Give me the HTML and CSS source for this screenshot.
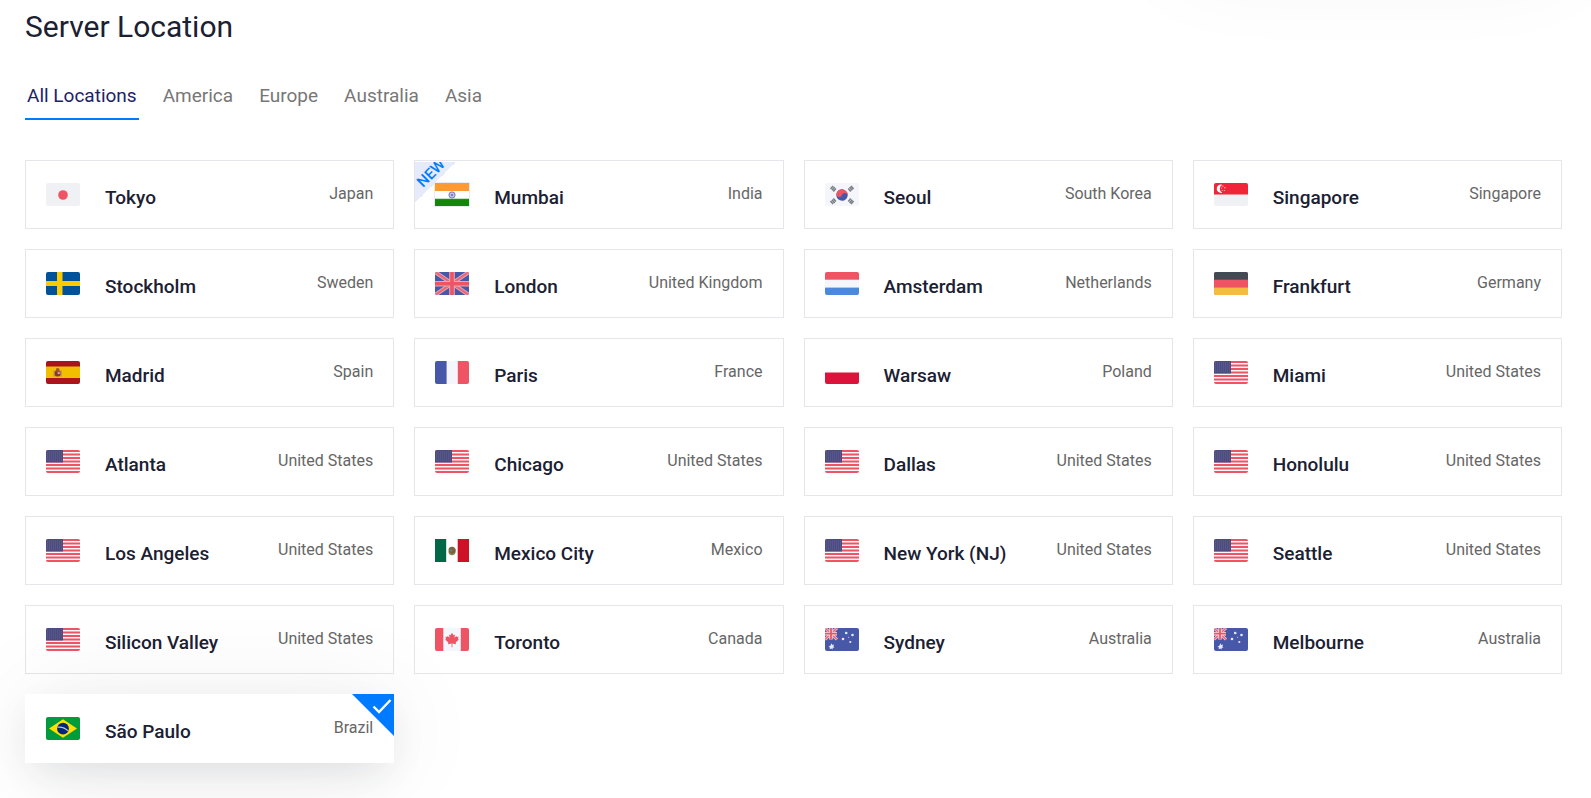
FILE: index.html
```html
<!DOCTYPE html>
<html lang="en">
<head>
<meta charset="utf-8">
<meta name="viewport" content="width=device-width, initial-scale=1">
<title>Server Location</title>
<link rel="stylesheet" href="styles.css">
</head>
<body>
<svg class="sprite" aria-hidden="true">
  <symbol id="jp" viewBox="0 0 34 23"><rect width="34" height="23" fill="#f0f1f5"/><circle cx="17" cy="12" r="4.8" fill="#ee5464"/></symbol>
  <symbol id="in" viewBox="0 0 34 23"><rect width="34" height="23" fill="#fff"/><rect width="34" height="8" fill="#ff9933"/><rect y="16" width="34" height="7" fill="#138808"/><rect y="15.5" width="34" height=".6" fill="#8cc487"/><circle cx="17" cy="12" r="3.1" fill="#c3c3e3" stroke="#7878b8" stroke-width="1"/><circle cx="17" cy="12" r="1.1" fill="#6c6cb0"/></symbol>
  <symbol id="kr" viewBox="0 0 34 23"><rect width="34" height="23" fill="#f5f6fb"/><g transform="rotate(20 17 12)"><circle cx="17" cy="12" r="5.7" fill="#4758a9"/><path d="M11.3 12a5.7 5.7 0 0 1 11.4 0a2.85 2.85 0 0 0-5.7 0a2.85 2.85 0 0 1-5.7 0z" fill="#ee5464"/></g><g stroke="#7b7f87" stroke-width="1.6"><path d="M5.5 5.4l2.6-3M7 6.8l2.7-3.2M8.3 8l2.6-3.1M23.3 4.9l2.5 3.1M24.6 3.6l2.7 3.2M26 2.4l2.6 3M5.5 17.6l2.6 3M7 16.2l2.7 3.2M8.3 15l2.6 3.1M23.3 18.1l2.5-3.1M24.6 19.4l2.7-3.2M26 20.6l2.6-3" transform="translate(0 .5)"/></g></symbol>
  <symbol id="sg" viewBox="0 0 34 23"><rect width="34" height="23" fill="#f0f1f5"/><rect width="34" height="11.5" fill="#f02538"/><path d="M8.2 1.7a4.2 4.2 0 1 0 0 8a4.5 4.5 0 0 1 0-8z" fill="#fff"/><g fill="#ffc5cb"><circle cx="8.9" cy="3.1" r=".7"/><circle cx="7.6" cy="5" r=".6"/><circle cx="10.9" cy="4.7" r=".7"/><circle cx="8.3" cy="7.5" r=".6"/><circle cx="10.4" cy="7.5" r=".6"/></g></symbol>
  <symbol id="se" viewBox="0 0 34 23"><rect width="34" height="23" fill="#00529b"/><path d="M11 0h5.5v23H11zM0 9h34v5H0z" fill="#fecb00"/></symbol>
  <symbol id="gb" viewBox="0 0 34 23"><rect width="34" height="23" fill="#4758a9"/><path d="M0 0l34 23M34 0L0 23" stroke="#dfa8be" stroke-width="4"/><path d="M0 0l34 23M34 0L0 23" stroke="#ee6674" stroke-width="2.2"/><path d="M17 0v23M0 11.8h34" stroke="#f4a5b1" stroke-width="5.6"/><path d="M17 0v23M0 11.8h34" stroke="#ee5464" stroke-width="3.6"/></symbol>
  <symbol id="nl" viewBox="0 0 34 23"><rect width="34" height="23" fill="#f4f6fb"/><rect width="34" height="7.7" fill="#ee5464"/><rect y="15.6" width="34" height="7.4" fill="#4a89dc"/></symbol>
  <symbol id="de" viewBox="0 0 34 23"><rect width="34" height="23" fill="#ee5464"/><rect width="34" height="7.7" fill="#434a54"/><rect y="15.6" width="34" height="7.4" fill="#f6bb42"/></symbol>
  <symbol id="es" viewBox="0 0 34 23"><rect width="34" height="23" fill="#aa151b"/><rect y="5.5" width="34" height="11.5" fill="#f1bf00"/><path d="M7.5 9.5h2v6h-2zM13.8 9.5h2v6h-2z" fill="#c98b4b"/><rect x="8.800" y="9.600" width="5.600" height="6" rx="2" fill="#853a2c"/><circle cx="11.7" cy="8.9" r="1.9" fill="#a9512a"/><circle cx="12.8" cy="12" r="1.3" fill="#c9a0a0"/></symbol>
  <symbol id="fr" viewBox="0 0 34 23"><rect width="34" height="23" fill="#f5f6fb"/><rect width="11.6" height="23" fill="#4758a9"/><rect x="22.8" width="11.2" height="23" fill="#ee5464"/></symbol>
  <symbol id="pl" viewBox="0 0 34 23"><rect width="34" height="23" fill="#fff"/><rect y="11.5" width="34" height="11.5" fill="#dc143c"/></symbol>
  <symbol id="us" viewBox="0 0 34 23"><rect width="34" height="23" fill="#f7f6fa"/><path d="M0 .9h34M0 4.4h34M0 8h34M0 11.5h34M0 15h34M0 18.6h34M0 22.1h34" stroke="#ee5464" stroke-width="2"/><rect width="17" height="12.5" fill="#4d4c80"/><path d="M1 2h15M1 4h15M1 6h15M1 8h15M1 10h15" stroke="#6b6a98" stroke-width=".7" stroke-dasharray="1 1"/></symbol>
  <symbol id="mx" viewBox="0 0 34 23"><rect width="34" height="23" fill="#fff"/><rect width="11.2" height="23" fill="#006847"/><rect x="22.7" width="11.3" height="23" fill="#ce1126"/><circle cx="17" cy="12" r="4.2" fill="#c4bf9c"/><path d="M14 9q5-3 6.500 1.500q.5 4-3 4.500q-3.500 .5-3.500-2z" fill="#80603f"/><circle cx="16" cy="11.4" r="1.2" fill="#4d8f8a"/><path d="M14 14.5q3 2.500 6 0" stroke="#6d8b51" fill="none"/></symbol>
  <symbol id="ca" viewBox="0 0 34 23"><rect width="34" height="23" fill="#f5f6fb"/><path d="M0 0h8.300v23H0zM25.800 0H34v23h-8.200z" fill="#ee5464"/><path d="M17 4.700l1.500 2.500 1.500-.7-.6 3.300 2-1.800.5 1.100 1.700-.3-.6 2.200.9.600-3.200 3 .3 1.600-3.600-.6v3.600h-.8v-3.600l-3.600.6.3-1.600-3.200-3 .9-.6-.6-2.200 1.700.3.500-1.100 2 1.800-.6-3.300 1.500.7z" fill="#ee5464"/></symbol>
  <symbol id="au" viewBox="0 0 34 23"><rect width="34" height="23" fill="#4758a9"/><path d="M0 0l12 11.5M12 0L0 11.5" stroke="#f2c4d0" stroke-width="3"/><path d="M0 0l12 11.5M12 0L0 11.5" stroke="#ee6674" stroke-width="1.3"/><path d="M6 0v11.5M0 5.7h12" stroke="#f5e1e9" stroke-width="3.4"/><path d="M6 0v11.5M0 5.7h12" stroke="#ee5464" stroke-width="1.8"/><g fill="#e6e9f6"><path d="M6.500 15.200l.8 1.700 1.900-.3-.9 1.600 1.200 1.400-1.800.2-.1 1.800-1.300-1.200-1.600.9.200-1.800-1.500-.9 1.800-.6z"/><circle cx="21.2" cy="5" r="1.3"/><circle cx="27.5" cy="7" r="1.3"/><circle cx="18" cy="11" r="1.3"/><circle cx="25.3" cy="14" r="1.1"/><circle cx="23.6" cy="9.2" r=".5"/></g></symbol>
  <symbol id="br" viewBox="0 0 34 23"><rect width="34" height="23" fill="#009b3a"/><path d="M17 2.200L31 11.500 17 20.800 3 11.500z" fill="#fedf00"/><circle cx="17" cy="11.7" r="5.9" fill="#002776"/><path d="M11.500 10.200q6-1 11 4" stroke="#b9c6d8" stroke-width="1.2" fill="none"/></symbol>
</svg>

<div class="panel-above"></div>
<main class="page">
  <h1 class="title">Server Location</h1>
  <nav class="tabs" aria-label="Region">
    <button type="button" class="tab tab-active">All Locations</button>
    <button type="button" class="tab">America</button>
    <button type="button" class="tab">Europe</button>
    <button type="button" class="tab">Australia</button>
    <button type="button" class="tab">Asia</button>
  </nav>
  <div class="grid">
    <label class="card"><input class="pick" type="radio" name="loc"><svg class="flag"><use href="#jp"/></svg><span class="city">Tokyo</span><span class="country">Japan</span></label>
    <label class="card"><input class="pick" type="radio" name="loc"><span class="ribbon"><span class="ribbon-text">NEW</span></span><svg class="flag flag-outlined"><use href="#in"/></svg><span class="city">Mumbai</span><span class="country">India</span></label>
    <label class="card"><input class="pick" type="radio" name="loc"><svg class="flag"><use href="#kr"/></svg><span class="city">Seoul</span><span class="country">South Korea</span></label>
    <label class="card"><input class="pick" type="radio" name="loc"><svg class="flag"><use href="#sg"/></svg><span class="city">Singapore</span><span class="country">Singapore</span></label>
    <label class="card"><input class="pick" type="radio" name="loc"><svg class="flag"><use href="#se"/></svg><span class="city">Stockholm</span><span class="country">Sweden</span></label>
    <label class="card"><input class="pick" type="radio" name="loc"><svg class="flag"><use href="#gb"/></svg><span class="city">London</span><span class="country">United Kingdom</span></label>
    <label class="card"><input class="pick" type="radio" name="loc"><svg class="flag"><use href="#nl"/></svg><span class="city">Amsterdam</span><span class="country">Netherlands</span></label>
    <label class="card"><input class="pick" type="radio" name="loc"><svg class="flag"><use href="#de"/></svg><span class="city">Frankfurt</span><span class="country">Germany</span></label>
    <label class="card"><input class="pick" type="radio" name="loc"><svg class="flag"><use href="#es"/></svg><span class="city">Madrid</span><span class="country">Spain</span></label>
    <label class="card"><input class="pick" type="radio" name="loc"><svg class="flag"><use href="#fr"/></svg><span class="city">Paris</span><span class="country">France</span></label>
    <label class="card"><input class="pick" type="radio" name="loc"><svg class="flag"><use href="#pl"/></svg><span class="city">Warsaw</span><span class="country">Poland</span></label>
    <label class="card"><input class="pick" type="radio" name="loc"><svg class="flag"><use href="#us"/></svg><span class="city">Miami</span><span class="country">United States</span></label>
    <label class="card"><input class="pick" type="radio" name="loc"><svg class="flag"><use href="#us"/></svg><span class="city">Atlanta</span><span class="country">United States</span></label>
    <label class="card"><input class="pick" type="radio" name="loc"><svg class="flag"><use href="#us"/></svg><span class="city">Chicago</span><span class="country">United States</span></label>
    <label class="card"><input class="pick" type="radio" name="loc"><svg class="flag"><use href="#us"/></svg><span class="city">Dallas</span><span class="country">United States</span></label>
    <label class="card"><input class="pick" type="radio" name="loc"><svg class="flag"><use href="#us"/></svg><span class="city">Honolulu</span><span class="country">United States</span></label>
    <label class="card"><input class="pick" type="radio" name="loc"><svg class="flag"><use href="#us"/></svg><span class="city">Los Angeles</span><span class="country">United States</span></label>
    <label class="card"><input class="pick" type="radio" name="loc"><svg class="flag flag-square"><use href="#mx"/></svg><span class="city">Mexico City</span><span class="country">Mexico</span></label>
    <label class="card"><input class="pick" type="radio" name="loc"><svg class="flag"><use href="#us"/></svg><span class="city">New York (NJ)</span><span class="country">United States</span></label>
    <label class="card"><input class="pick" type="radio" name="loc"><svg class="flag"><use href="#us"/></svg><span class="city">Seattle</span><span class="country">United States</span></label>
    <label class="card"><input class="pick" type="radio" name="loc"><svg class="flag"><use href="#us"/></svg><span class="city">Silicon Valley</span><span class="country">United States</span></label>
    <label class="card"><input class="pick" type="radio" name="loc"><svg class="flag"><use href="#ca"/></svg><span class="city">Toronto</span><span class="country">Canada</span></label>
    <label class="card"><input class="pick" type="radio" name="loc"><svg class="flag"><use href="#au"/></svg><span class="city">Sydney</span><span class="country">Australia</span></label>
    <label class="card"><input class="pick" type="radio" name="loc"><svg class="flag"><use href="#au"/></svg><span class="city">Melbourne</span><span class="country">Australia</span></label>
    <label class="card card-selected"><input class="pick" type="radio" name="loc" checked><svg class="flag"><use href="#br"/></svg><span class="city">São Paulo</span><span class="country">Brazil</span><svg class="corner" viewBox="0 0 42 42"><path d="M0 0h42v42z" fill="#007bff"/><path d="M21.500 12.500l5.500 5.500L38.500 6" fill="none" stroke="#fff" stroke-width="2.400"/></svg></label>
  </div>
</main>
</body>
</html>
```
FILE: styles.css
```css
* {
  box-sizing: border-box;
}

body {
  margin: 0;
  background: #fff;
  color: #1b2033;
  font-family: Roboto, sans-serif;
  font-size: 16px;
  overflow-x: hidden;
}

.sprite {
  position: absolute;
  width: 0;
  height: 0;
}

/* Bottom of the order panel, whose shadow falls on this section */
.panel-above {
  position: absolute;
  top: -128px;
  right: 29px;
  width: 24%;
  height: 80px;
  box-shadow: 0 10px 100px rgba(0, 0, 0, 0.07);
}

.page {
  padding: 9px 29px 35px 25px;
}

.title {
  margin: 0 0 39px;
  font-size: 30px;
  font-weight: 400;
  line-height: 36px;
}

.tabs {
  display: flex;
  gap: 22px;
  margin-bottom: 40px;
}

.tab {
  padding: 0 2px 10px;
  border: 0;
  border-bottom: 2px solid transparent;
  background: none;
  color: #777;
  font-family: inherit;
  font-size: 19px;
  line-height: 24px;
  cursor: pointer;
}

.tab-active {
  border-bottom-color: #007bff;
  color: #1e2265;
}

.grid {
  display: grid;
  grid-template-columns: repeat(4, 1fr);
  gap: 20px;
}

.card {
  position: relative;
  display: flex;
  align-items: center;
  min-height: 69px;
  padding: 0 20px;
  border: 1px solid #e4e6e9;
  cursor: pointer;
}

.card-selected {
  border-color: transparent;
  background: #fff;
  box-shadow: 0 4px 100px rgba(0, 0, 0, 0.08), 0 14px 40px -8px rgba(30, 40, 60, 0.12);
}

.pick {
  position: absolute;
  inset: 0;
  margin: 0;
  appearance: none;
  cursor: pointer;
}

.flag {
  flex: none;
  width: 34px;
  height: 23px;
  margin-right: 25px;
  border-radius: 2px;
}

.flag-outlined {
  border-radius: 0;
  box-shadow: 0 0 0 1px #e9ebf0;
}

.flag-square {
  border-radius: 0;
}

.city {
  padding-top: 6px;
  font-size: 19px;
  font-weight: 500;
  line-height: 24px;
}

.country {
  margin-left: auto;
  padding-bottom: 2px;
  color: #666;
  line-height: 24px;
}

.ribbon {
  position: absolute;
  top: 1px;
  left: 0;
  width: 41px;
  height: 41px;
  overflow: hidden;
  background: linear-gradient(135deg, #e5ebfb 50%, transparent 50%);
}

.ribbon-text {
  position: absolute;
  top: 1px;
  left: -4px;
  width: 40px;
  color: #007bff;
  font-size: 15px;
  font-weight: 500;
  line-height: 20px;
  text-align: center;
  transform: rotate(-45deg);
}

.corner {
  position: absolute;
  top: -1px;
  right: -1px;
  width: 42px;
  height: 42px;
}
```
